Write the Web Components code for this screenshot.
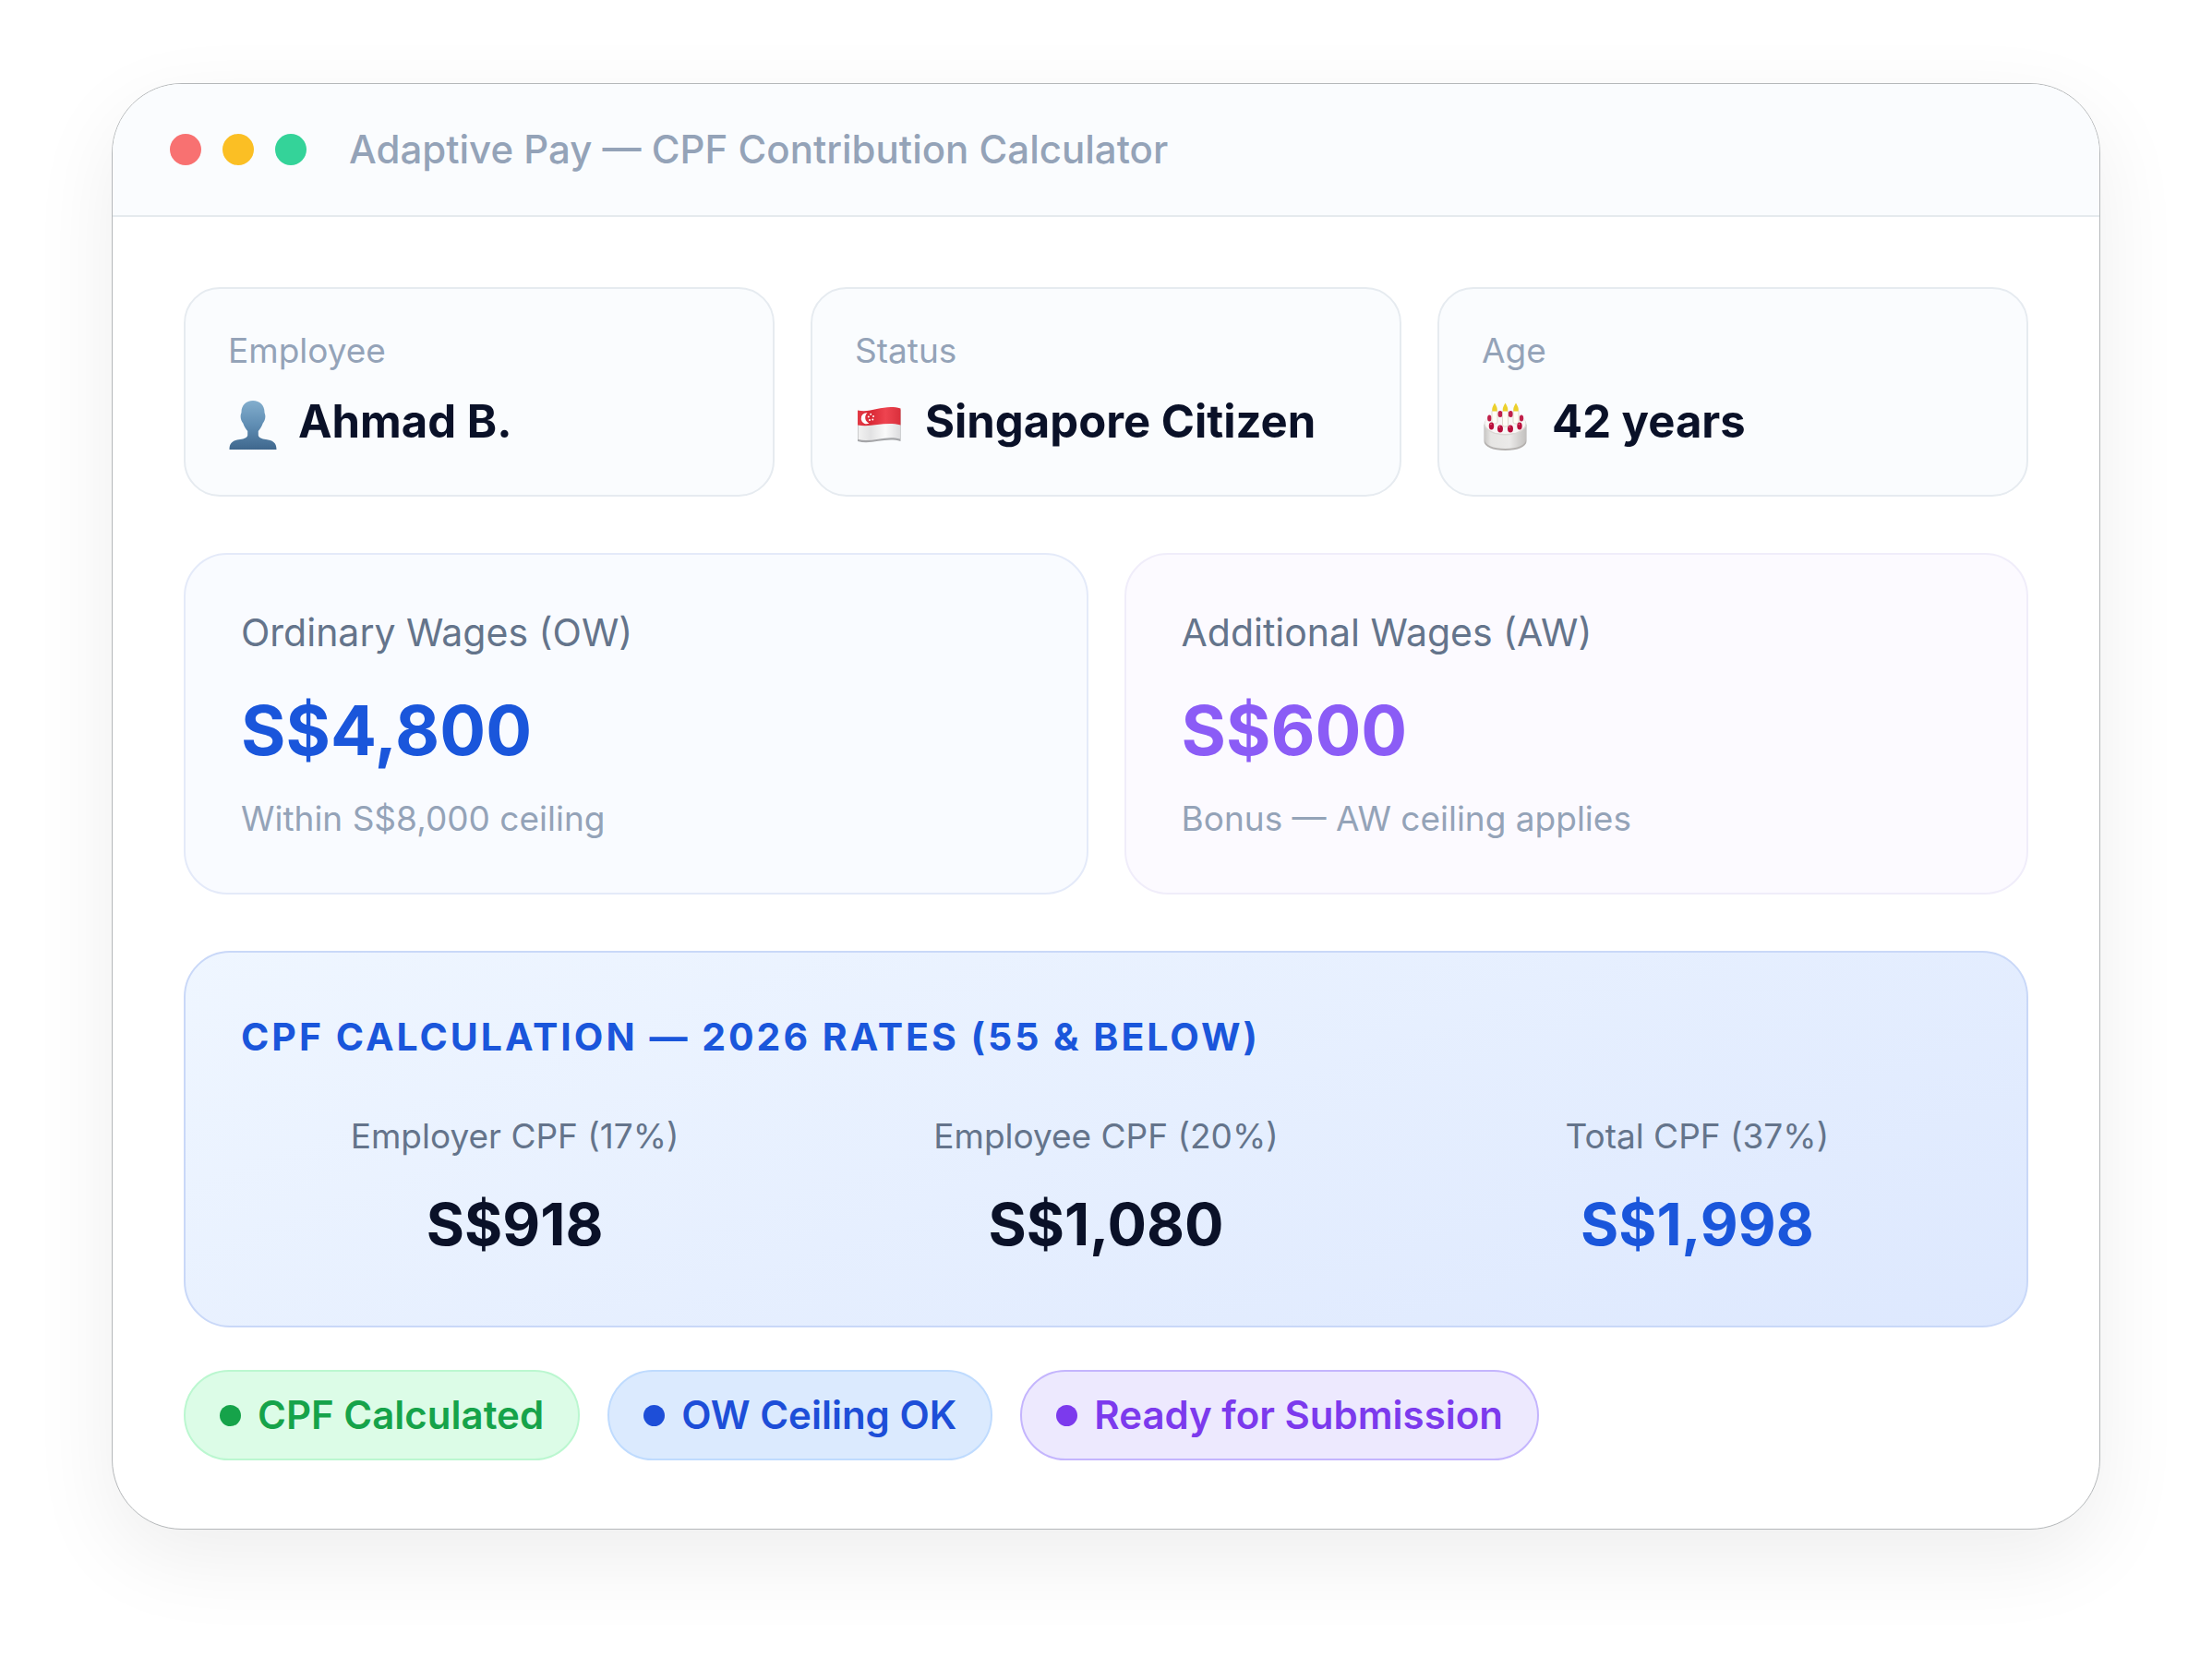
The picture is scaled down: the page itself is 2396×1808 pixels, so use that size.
<!DOCTYPE html>
<html lang="en">
<head>
<meta charset="utf-8">
<title>Adaptive Pay — CPF Contribution Calculator</title>
<style>
  body { margin: 0; padding: 90px 121px 150px; background: #fff; color: #0a1128; font-family: Inter, "Liberation Sans", sans-serif; }
</style>
</head>
<body>
<app-window heading="Adaptive Pay — CPF Contribution Calculator">
  <card-row>
    <info-card label="Employee" value="Ahmad B.">
      <svg slot="icon" width="54" height="68" viewBox="0 0 54 68" aria-hidden="true">
        <defs><linearGradient id="person" x1="0" y1="0" x2="0" y2="1"><stop offset="0" stop-color="#83aecd"/><stop offset=".5" stop-color="#5f8db3"/><stop offset="1" stop-color="#3f678d"/></linearGradient></defs>
        <path fill="url(#person)" d="M27 12C34.500 12 39.500 17 39.500 24.500C39.500 26 40.400 26.400 40.400 29C40.400 32.500 39.200 34.500 37.700 36.500C36.600 40 34.600 43 32.800 45V49.500C33.300 52.500 36.500 53.200 41 54C48 55 52.500 57 52.500 65H1.500C1.500 57 6 55 13 54C17.500 53.200 20.700 52.500 21.200 49.500V45C19.400 43 17.400 40 16.300 36.500C14.800 34.500 13.600 32.500 13.600 29C13.600 26.400 14.500 26 14.500 24.500C14.500 17 19.500 12 27 12Z"/>
      </svg>
    </info-card>
    <info-card label="Status" value="Singapore Citizen">
      <svg slot="icon" width="54" height="68" viewBox="0 0 54 68" aria-hidden="true">
        <defs>
          <linearGradient id="red" x1="0" x2="1"><stop offset="0" stop-color="#e33a46"/><stop offset=".3" stop-color="#d92835"/><stop offset=".65" stop-color="#ee4450"/><stop offset="1" stop-color="#d9303c"/></linearGradient>
          <linearGradient id="white" x1="0" x2="1"><stop offset="0" stop-color="#f2f2f2"/><stop offset=".3" stop-color="#e2e2e3"/><stop offset=".65" stop-color="#fafafa"/><stop offset="1" stop-color="#dcdcde"/></linearGradient>
        </defs>
        <path fill="#a4a5a8" d="M3 23.500C18 27 31 17 49.500 22V56C33 51 18 60.500 3 56Z"/>
        <path fill="url(#white)" d="M3.500 36C18 40 33 34 49 38V53.500C33 49 18 58 3.500 54Z"/>
        <path fill="url(#red)" d="M3 22.500C18 26 31 15.500 49.500 20.500V38.500C33 34 18 41.500 3 38.500Z"/>
        <path fill="#fff" d="M13.500 25.300A6 6 0 1 0 15.500 36.500A6.600 6.600 0 0 1 13.500 25.300Z"/>
        <g fill="#fff"><circle cx="17.200" cy="26.800" r="1"/><circle cx="14.800" cy="29.500" r="1"/><circle cx="20" cy="29" r="1"/><circle cx="16" cy="33" r="1"/><circle cx="19.300" cy="32.600" r="1"/></g>
      </svg>
    </info-card>
    <info-card label="Age" value="42 years">
      <svg slot="icon" width="54" height="68" viewBox="0 0 54 68" aria-hidden="true">
        <defs><linearGradient id="cake" x1="0" x2="1"><stop offset="0" stop-color="#c9c7c5"/><stop offset=".15" stop-color="#e6e5e3"/><stop offset=".6" stop-color="#ebeae9"/><stop offset="1" stop-color="#c2c0be"/></linearGradient></defs>
        <path fill="#b3b0ae" d="M2.500 38V56C2.500 62 12 66 25.500 66S48.500 62 48.500 56V38Z"/>
        <path fill="url(#cake)" d="M3 37V54C3 60 12 64 25.500 64S48 60 48 54V37Z"/>
        <ellipse cx="25.500" cy="37.500" rx="23" ry="12" fill="#dad7d4"/>
        <ellipse cx="25.500" cy="36.500" rx="22" ry="11.500" fill="#f8f6f5"/>
        <g fill="#c0204a"><ellipse cx="20" cy="26.500" rx="2.600" ry="3.600"/><ellipse cx="31.300" cy="26.500" rx="2.600" ry="3.600"/><ellipse cx="8.300" cy="31" rx="2.200" ry="3.600"/><ellipse cx="43" cy="31" rx="2.200" ry="3.600"/></g>
        <g fill="#fffdf6" stroke="#d8cfc2" stroke-width=".8"><rect x="11" y="22" width="6" height="15" rx="2"/><rect x="22.500" y="22" width="6" height="18" rx="2"/><rect x="34" y="22" width="6" height="15" rx="2"/></g>
        <g fill="#ecd02c"><path d="M14 14.500C16 18 17.500 20.500 16.500 23.500H11.500C10.500 20.500 12 18 14 14.500Z"/><path d="M25.500 14.500C27.500 18 29 20.500 28 23.500H23C22 20.500 23.500 18 25.500 14.500Z"/><path d="M37 14.500C39 18 40.500 20.500 39.500 23.500H34.500C33.500 20.500 35 18 37 14.500Z"/></g>
        <g fill="#b90f3b"><ellipse cx="10.500" cy="39.500" rx="2.700" ry="3.900"/><ellipse cx="20" cy="42.500" rx="3" ry="3.900"/><ellipse cx="31" cy="42.500" rx="3" ry="3.900"/><ellipse cx="41" cy="39.500" rx="2.700" ry="3.900"/></g>
        <g fill="#ea6b86"><circle cx="10" cy="37.600" r=".8"/><circle cx="19.300" cy="40.600" r=".8"/><circle cx="30.300" cy="40.600" r=".8"/><circle cx="40.400" cy="37.600" r=".8"/></g>
      </svg>
    </info-card>
  </card-row>
  <card-row>
    <wage-card tone="blue" label="Ordinary Wages (OW)" value="S$4,800" note="Within S$8,000 ceiling"></wage-card>
    <wage-card tone="violet" label="Additional Wages (AW)" value="S$600" note="Bonus — AW ceiling applies"></wage-card>
  </card-row>
  <cpf-panel heading="CPF CALCULATION — 2026 RATES (55 &amp; BELOW)">
    <cpf-figure label="Employer CPF (17%)" value="S$918"></cpf-figure>
    <cpf-figure label="Employee CPF (20%)" value="S$1,080"></cpf-figure>
    <cpf-figure label="Total CPF (37%)" value="S$1,998" total></cpf-figure>
  </cpf-panel>
  <pill-row>
    <status-pill tone="green">CPF Calculated</status-pill>
    <status-pill tone="blue">OW Ceiling OK</status-pill>
    <status-pill tone="violet">Ready for Submission</status-pill>
  </pill-row>
</app-window>

<script>
  // Registers an element whose shadow root is built from its attributes.
  const define = (name, render) => customElements.define(name, class extends HTMLElement {
    connectedCallback() {
      if (this.shadowRoot) return;
      const root = this.attachShadow({ mode: 'open' });
      root.innerHTML = '<style>*{box-sizing:border-box;margin:0}</style>' + render();
      root.querySelectorAll('[data-text]').forEach(el => { el.textContent = this.getAttribute(el.dataset.text); });
    }
  });

  define('app-window', () => `
    <style>
      :host { display: block; background: #fff; border: 1px solid #b5b8ba; border-radius: 76px; overflow: hidden;
        box-shadow: 0 31px 94px rgba(0,0,0,.07); }
      header { display: flex; align-items: center; gap: 23px; height: 144px; padding: 0 62px; background: #fafcfe; border-bottom: 2px solid #e5eaee; }
      i { width: 34px; height: 34px; border-radius: 50%; background: #f87171; }
      i:nth-child(2) { background: #fbbf24; }
      i:nth-child(3) { background: #34d399; }
      h1 { margin-left: 23px; font-size: 42px; font-weight: 500; line-height: 50px; color: #94a3b8; }
      main { padding: 76px 77px 74px; display: flex; flex-direction: column; gap: 61px; }
    </style>
    <header><i></i><i></i><i></i><h1 data-text="heading"></h1></header>
    <main><slot></slot></main>`);

  define('card-row', () => `
    <style>
      :host { display: flex; gap: 39px; }
      ::slotted(*) { flex: 1 1 0; min-width: 0; }
    </style><slot></slot>`);

  define('info-card', () => `
    <style>
      :host { display: block; box-sizing: border-box; padding: 46px; border: 2px solid #e6ebf0; border-radius: 39px; background: #fafcfe; }
      p { font-size: 37px; line-height: 41px; color: #94a3b8; }
      div { display: flex; align-items: center; gap: 22px; margin-top: 22px; height: 68px; font-size: 49px; font-weight: 700; white-space: nowrap; }
    </style>
    <p data-text="label"></p>
    <div><slot name="icon"></slot><span data-text="value"></span></div>`);

  define('wage-card', () => `
    <style>
      :host { display: block; box-sizing: border-box; padding: 60px; border: 2px solid #e4eaf9; border-radius: 47px; background: #f9fbff; --value: #1a56db; }
      :host([tone="violet"]) { background: #fcfaff; border-color: #f0edfa; --value: #8b5cf6; }
      .label { font-size: 41px; line-height: 48px; color: #64748b; }
      .value { margin: 40px 0 34px; font-size: 74px; line-height: 84px; font-weight: 700; color: var(--value); }
      .note { font-size: 37px; line-height: 40px; color: #94a3b8; }
    </style>
    <p class="label" data-text="label"></p>
    <p class="value" data-text="value"></p>
    <p class="note" data-text="note"></p>`);

  define('cpf-panel', () => `
    <style>
      :host { display: block; box-sizing: border-box; padding: 60px; border: 2px solid #c9d8f8; border-radius: 50px;
        background: linear-gradient(160deg, #eff6ff, #dde8fe) border-box; }
      h2 { font-size: 41px; line-height: 62px; font-weight: 700; letter-spacing: 3px; color: #1a56db; }
      div { display: grid; grid-template-columns: repeat(3, 1fr); gap: 47px; margin-top: 54px; }
    </style>
    <h2 data-text="heading"></h2>
    <div><slot></slot></div>`);

  define('cpf-figure', () => `
    <style>
      :host { display: block; text-align: center; }
      .label { font-size: 37px; line-height: 46px; color: #64748b; }
      .value { margin-top: 22px; font-size: 63px; line-height: 100px; font-weight: 700; }
      :host([total]) .value { color: #1a56db; }
    </style>
    <p class="label" data-text="label"></p>
    <p class="value" data-text="value"></p>`);

  define('pill-row', () => `
    <style>:host { display: flex; flex-wrap: wrap; gap: 30px; margin-top: -15px; }</style><slot></slot>`);

  define('status-pill', () => `
    <style>
      :host { display: flex; align-items: center; gap: 18px; box-sizing: border-box; height: 98px; padding: 0 37px; border: 2px solid #bbf7d0;
        border-radius: 49px; background: #dcfce7; color: #16a34a; font-size: 42px; line-height: 50px; font-weight: 600; }
      :host([tone="blue"]) { background: #dbeafe; border-color: #bfdbfe; color: #1d4ed8; }
      :host([tone="violet"]) { background: #ede9fe; border-color: #c4b5fd; color: #7c3aed; }
      i { width: 23px; height: 23px; border-radius: 50%; background: currentColor; }
    </style>
    <i></i><span><slot></slot></span>`);
</script>
</body>
</html>
